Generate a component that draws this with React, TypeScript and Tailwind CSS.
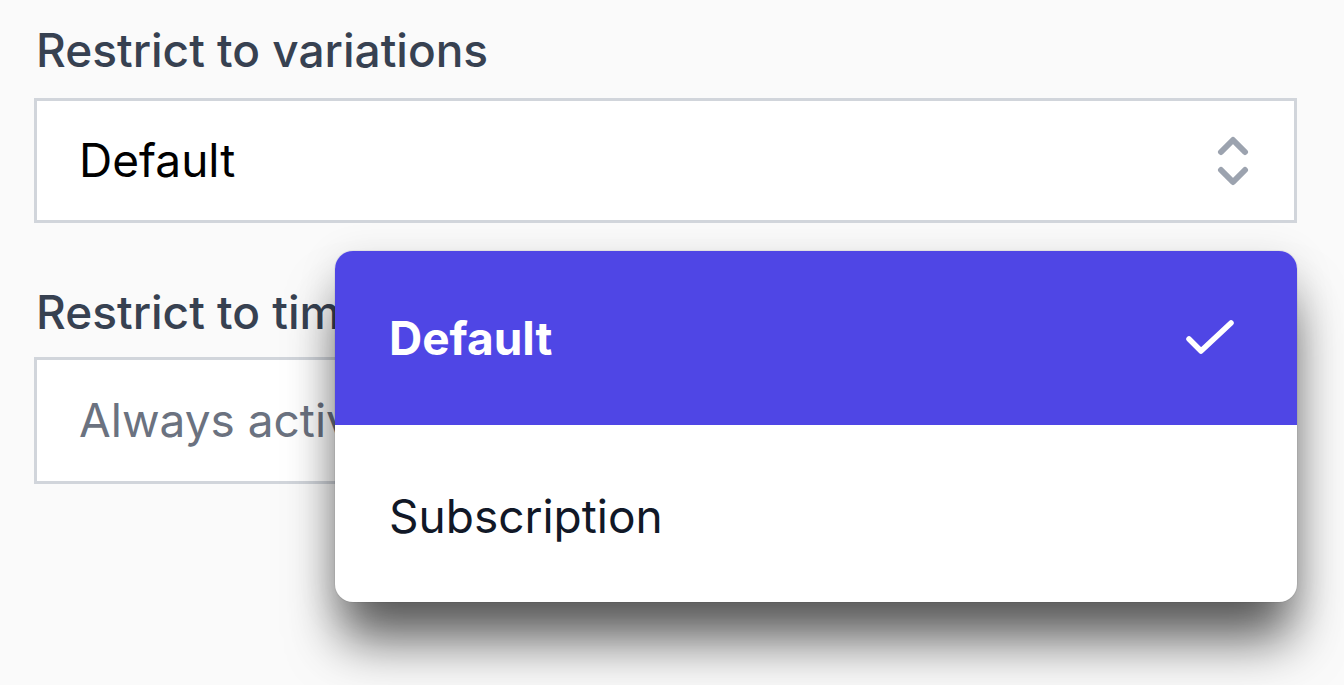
import React from 'react';

const font = { fontFamily: 'Inter, "Noto Sans", sans-serif' };

const ChevronUpDown = () => (
  <svg viewBox="0 0 32 52" fill="none" stroke="currentColor" strokeWidth={6} strokeLinecap="round" strokeLinejoin="round" className="w-[32px] h-[52px]">
    <path d="M4 17L16 5L28 17" />
    <path d="M4 35L16 47L28 35" />
  </svg>
);

const Check = () => (
  <svg viewBox="0 0 50 38" fill="none" stroke="currentColor" strokeWidth={5.5} strokeLinecap="round" strokeLinejoin="round" className="w-[50px] h-[38px]">
    <path d="M4 20L16 32L46 4" />
  </svg>
);

export default function App() {
  return (
    <div className="relative w-[1344px] h-[685px] overflow-hidden bg-[#fafafa]" style={font}>
      <div className="flex flex-col pl-[34px] pr-[47px] pt-[20px]">
        <label className="pl-[2px] text-[46px] leading-[60px] font-medium text-[#374151]">Restrict to variations</label>
        <div className="mt-[18px] h-[125px] flex items-center justify-between bg-white border-[3px] border-[#d1d5db] pl-[42px] pr-[45px]">
          <span className="text-[46px] text-black">Default</span>
          <span className="text-[#9ca3af]"><ChevronUpDown /></span>
        </div>
        <label className="mt-[59px] pl-[2px] text-[46px] leading-[60px] font-medium text-[#374151]">Restrict to time</label>
        <div className="mt-[15px] h-[127px] flex items-center bg-white border-[3px] border-[#d1d5db] pl-[42px]">
          <span className="text-[46px] text-[#6b7280]">Always active</span>
        </div>
      </div>

      <div className="absolute left-[335px] top-[251px] w-[962px] rounded-[18px] bg-white overflow-hidden ring-1 ring-black/5 shadow-[0_44px_52px_-6px_rgba(0,0,0,0.62),0_8px_40px_rgba(0,0,0,0.12)]">
        <div className="h-[174px] flex items-center justify-between bg-[#4f46e5] pl-[54px] pr-[62px]">
          <span className="text-[46px] font-bold text-white">Default</span>
          <span className="text-white"><Check /></span>
        </div>
        <div className="h-[177px] flex items-center pl-[54px] pt-[6px]">
          <span className="text-[46px] text-[#111827]">Subscription</span>
        </div>
      </div>
    </div>
  );
}
